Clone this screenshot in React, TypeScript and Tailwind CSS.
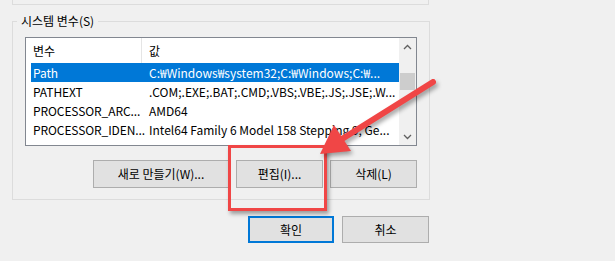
import React from "react";

const rows = [
  { name: "Path", value: "C:₩Windows₩system32;C:₩Windows;C:₩...", selected: true },
  { name: "PATHEXT", value: ".COM;.EXE;.BAT;.CMD;.VBS;.VBE;.JS;.JSE;.W..." },
  { name: "PROCESSOR_ARC...", value: "AMD64" },
  { name: "PROCESSOR_IDEN...", value: "Intel64 Family 6 Model 158 Stepping 9, Ge..." },
];

function WinButton({ label, className = "" }: { label: string; className?: string }) {
  return (
    <button className={`h-[28px] bg-[#e1e1e1] border border-[#adadad] text-[12px] text-black ${className}`}>
      {label}
    </button>
  );
}

export default function App() {
  return (
    <div
      className="relative w-[615px] h-[261px] overflow-hidden bg-[#f0f0f0] text-black"
      style={{ fontFamily: '"Noto Sans CJK KR", "Noto Sans", sans-serif' }}
    >
      {/* bottom edge of the group above */}
      <div className="ml-[12px] w-[417px] h-[5px] border-x border-b border-[#dcdcdc]" />

      {/* System variables group */}
      <fieldset className="ml-[12px] mt-[8px] w-[417px] border border-[#dcdcdc] p-0">
        <legend className="ml-[4px] px-[4px] text-[12px] leading-[16px]">시스템 변수(S)</legend>
        <div className="px-[12px] pt-[8px] pb-[11px]">
          {/* list view */}
          <div className="w-[392px] h-[109px] border border-[#828790] bg-white flex">
            <div className="flex-1 pl-[5px] text-[12px]">
              <div className="flex h-[25px] items-center">
                <div className="w-[111px] h-full pl-[2px] flex items-center border-r border-[#e5e5e5]">변수</div>
                <div className="pl-[7px]">값</div>
              </div>
              {rows.map((r) => (
                <div
                  key={r.name}
                  className={`flex h-[19px] items-center whitespace-nowrap ${r.selected ? "bg-[#0078d7] text-white" : ""}`}
                >
                  <div className="w-[111px] shrink-0 pl-[2px] tracking-[-0.1px]">{r.name}</div>
                  <div className="pl-[7px]">{r.value}</div>
                </div>
              ))}
            </div>
            {/* scrollbar */}
            <div className="w-[17px] bg-[#f0f0f0] flex flex-col items-center">
              <div className="h-[17px] flex items-center justify-center">
                <svg width="9" height="6" viewBox="0 0 9 6">
                  <path d="M1 5 L4.5 1.5 L8 5" fill="none" stroke="#606060" strokeWidth="1.3" />
                </svg>
              </div>
              <div className="mt-[18px] w-[15px] h-[17px] bg-[#cdcdcd]" />
              <div className="flex-1" />
              <div className="h-[17px] flex items-center justify-center">
                <svg width="9" height="6" viewBox="0 0 9 6">
                  <path d="M1 1 L4.5 4.5 L8 1" fill="none" stroke="#606060" strokeWidth="1.3" />
                </svg>
              </div>
            </div>
          </div>

          <div className="mt-[14px] w-[392px] flex justify-end gap-[7px]">
            <WinButton label="새로 만들기(W)..." className="w-[136px]" />
            <WinButton label="편집(I)..." className="w-[87px]" />
            <WinButton label="삭제(L)" className="w-[87px]" />
          </div>
        </div>
      </fieldset>

      <div className="ml-[12px] mt-[16px] w-[417px] flex justify-end gap-[8px]">
        <button className="w-[86px] h-[27px] bg-[#e1e1e1] border-2 border-[#0078d7] text-[12px]">확인</button>
        <WinButton label="취소" className="w-[87px] !h-[27px]" />
      </div>

      {/* annotation: highlight box */}
      <div className="absolute left-[228px] top-[145px] w-[99px] h-[66px] border-[3px] border-[#f04646] shadow-[2px_3px_4px_rgba(0,0,0,0.35)]" />

      {/* annotation: arrow */}
      <svg
        className="absolute left-0 top-0 pointer-events-none"
        width="615"
        height="261"
        style={{ filter: "drop-shadow(2px 3px 2px rgba(0,0,0,0.35))" }}
      >
        <line x1="433" y1="82" x2="342" y2="139" stroke="#f04646" strokeWidth="6" strokeLinecap="round" />
        <polygon points="320,154 351,151 334,125" fill="#f04646" />
      </svg>
    </div>
  );
}
